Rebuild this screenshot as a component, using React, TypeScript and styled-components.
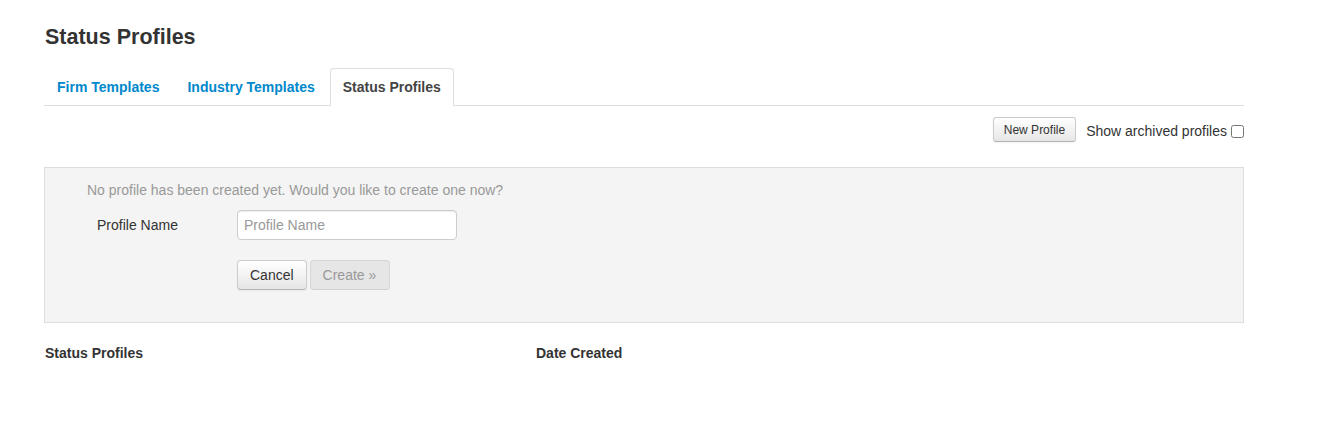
import styled, { createGlobalStyle } from "styled-components";

const GlobalStyle = createGlobalStyle`
  html, body {
    margin: 0;
    padding: 0;
    background: #fff;
  }
  body {
    font-family: "Liberation Sans", Arial, sans-serif;
    font-size: 14px;
    line-height: 20px;
    color: #333;
  }
`;

const Page = styled.div`
  width: 1200px;
  padding: 24px 0 0 44px;
`;

const Title = styled.h1`
  margin: 0 0 0 1px;
  font-size: 21.5px;
  line-height: 26px;
  font-weight: bold;
  color: #333;
`;

const Tabs = styled.ul`
  display: flex;
  list-style: none;
  margin: 18px 0 0;
  padding: 0;
  border-bottom: 1px solid #ddd;
`;

const Tab = styled.li<{ $active?: boolean }>`
  margin-bottom: -1px;
  margin-right: 2px;
  padding: 8px 12px;
  line-height: 20px;
  font-size: 14px;
  font-weight: bold;
  border: 1px solid ${(p) => (p.$active ? "#ddd" : "transparent")};
  border-bottom-color: ${(p) => (p.$active ? "#fff" : "transparent")};
  border-radius: 4px 4px 0 0;
  background: ${(p) => (p.$active ? "#fff" : "transparent")};
  color: ${(p) => (p.$active ? "#444" : "#0088cc")};
  cursor: pointer;
`;

const Toolbar = styled.div`
  display: flex;
  justify-content: flex-end;
  align-items: center;
  gap: 10px;
  margin-top: 11px;
`;

const SmallButton = styled.button`
  font-family: inherit;
  font-size: 12px;
  line-height: 16px;
  padding: 3px 10px;
  height: 25px;
  color: #333;
  background: linear-gradient(#fff, #e6e6e6);
  border: 1px solid #ccc;
  border-bottom-color: #b3b3b3;
  border-radius: 3px;
  box-shadow: inset 0 1px 0 rgba(255, 255, 255, 0.2), 0 1px 2px rgba(0, 0, 0, 0.05);
`;

const CheckLabel = styled.label`
  display: flex;
  align-items: center;
  gap: 4px;
  padding-top: 2px;
  font-size: 14px;
  color: #333;
`;

const Checkbox = styled.input`
  margin: 1px 0 0;
  width: 13px;
  height: 13px;
`;

const Panel = styled.div`
  margin-top: 25px;
  height: 156px;
  box-sizing: border-box;
  background: #f4f4f4;
  border: 1px solid #ddd;
  padding: 12px 0 0 42px;
`;

const Hint = styled.p`
  margin: 0 0 10px;
  color: #999;
  font-size: 14px;
  line-height: 20px;
`;

const FormRow = styled.div`
  display: flex;
  align-items: center;
`;

const Label = styled.label`
  width: 150px;
  padding-left: 10px;
  box-sizing: border-box;
  font-size: 14px;
`;

const TextInput = styled.input`
  width: 220px;
  height: 30px;
  box-sizing: border-box;
  padding: 4px 6px;
  font-family: inherit;
  font-size: 14px;
  color: #555;
  background: #fff;
  border: 1px solid #ccc;
  border-radius: 4px;
  box-shadow: inset 0 1px 1px rgba(0, 0, 0, 0.075);
  &::placeholder {
    color: #999;
  }
`;

const Actions = styled.div`
  display: flex;
  gap: 3px;
  margin: 20px 0 0 150px;
`;

const Button = styled.button<{ $disabled?: boolean }>`
  font-family: inherit;
  font-size: 14px;
  height: 30px;
  padding: 4px ${(p) => (p.$disabled ? "13px" : "12px")} 4px 12px;
  color: ${(p) => (p.$disabled ? "#999" : "#333")};
  background: ${(p) => (p.$disabled ? "#e6e6e6" : "linear-gradient(#fff, #e6e6e6)")};
  border: 1px solid ${(p) => (p.$disabled ? "#d6d6d6" : "#ccc")};
  border-bottom-color: ${(p) => (p.$disabled ? "#d0d0d0" : "#b3b3b3")};
  border-radius: 4px;
  box-shadow: ${(p) => (p.$disabled ? "none" : "inset 0 1px 0 rgba(255,255,255,.2), 0 1px 2px rgba(0,0,0,.05)")};
`;

const TableHead = styled.div`
  display: grid;
  grid-template-columns: 491px 1fr;
  margin-top: 20px;
  padding-left: 1px;
  font-weight: bold;
  font-size: 14px;
  line-height: 20px;
`;

export default function App() {
  return (
    <>
      <GlobalStyle />
      <Page>
        <Title>Status Profiles</Title>
        <Tabs>
          <Tab>Firm Templates</Tab>
          <Tab>Industry Templates</Tab>
          <Tab $active>Status Profiles</Tab>
        </Tabs>
        <Toolbar>
          <SmallButton>New Profile</SmallButton>
          <CheckLabel>
            Show archived profiles <Checkbox type="checkbox" />
          </CheckLabel>
        </Toolbar>
        <Panel>
          <Hint>No profile has been created yet. Would you like to create one now?</Hint>
          <FormRow>
            <Label>Profile Name</Label>
            <TextInput placeholder="Profile Name" />
          </FormRow>
          <Actions>
            <Button>Cancel</Button>
            <Button $disabled>Create »</Button>
          </Actions>
        </Panel>
        <TableHead>
          <span>Status Profiles</span>
          <span>Date Created</span>
        </TableHead>
      </Page>
    </>
  );
}
